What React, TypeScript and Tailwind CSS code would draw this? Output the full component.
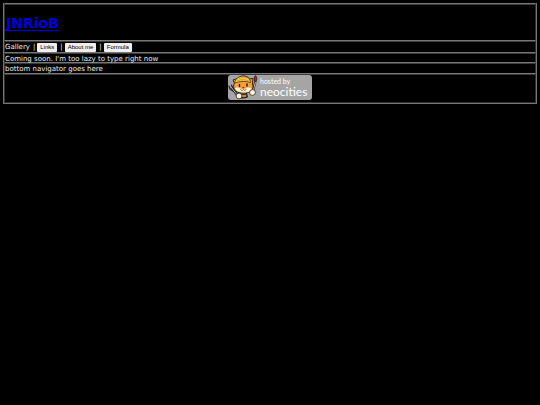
import type { ReactNode } from "react";

const links = ["Links", "About me", "Formula"];

function Row({ className, children }: { className: string; children: ReactNode }) {
  return (
    <div className={`flex border-x border-t border-x-[#303030] border-t-[#777777] shadow-[inset_0_1px_0_#3c3c3c] ${className}`}>
      {children}
    </div>
  );
}

function NeocitiesBadge() {
  return (
    <a
      href="#neocities"
      className="relative flex h-[25px] w-[84px] flex-col rounded-[3px] bg-[#a5a5a5] pl-8 font-[Lato,sans-serif] text-white"
    >
      <svg viewBox="0 0 34 27" className="absolute -left-px -top-px h-[27px] w-[34px]" aria-hidden="true">
        <g strokeLinecap="round" fill="none">
          <path d="M5 14l6 8" stroke="#20242a" strokeWidth="2.6" />
          <path d="M2 12l1 3 3 2 2-2-1-3M4.500 11l1.500 4" stroke="#20242a" strokeWidth="1.200" />
          <path d="M4 13l7 9" stroke="#a3b0bf" strokeWidth="1" />
          <path d="M28.500 7l-2.500 10" stroke="#292326" strokeWidth="2.2" />
          <path d="M28.500 8l-2.200 8" stroke="#d5c5c0" strokeWidth=".9" />
        </g>
        <path d="M28.500 1.500c2 2 1.600 4.900-.2 6.300-1.800-1.800-1.500-4.500.2-6.300z" fill="#b51f2d" stroke="#30151a" strokeWidth=".8" />
        <path
          d="M7.500 9L6 6l4-1.300C13.500 1 20 1 22.500 5l3.500-.6-.6 5.600c1.600 4-.2 7.500-4.700 8.500-6 1.400-12.500.5-13.800-4-.5-2-.2-4 .6-5.500z"
          fill="#f5a03a"
          stroke="#302313"
        />
        <path d="M7.500 9c1-5 6-8 11-6.500 4 1 5 4 5 6-4-1.500-10-1.500-16 .5z" fill="#f7c948" stroke="#49351a" strokeWidth=".8" />
        <path d="M12 4.500c3-1.500 6-1.500 8 0M10.500 6.800c4-1.500 7-1.500 11 0" stroke="#bd862a" strokeWidth=".6" fill="none" />
        <path d="M8 14c2-1 5-.6 6 1h4c1.500-2 4.500-2 6.500-.5-.5 3-3.500 4-7.500 4s-8-1.500-9-4.500z" fill="#fff3dc" />
        <path d="M12.500 10.500v2M20 10v2" stroke="#24170d" strokeWidth="1.400" strokeLinecap="round" />
        <path d="M15 13h2.500l-1.200 1.200z" fill="#5b2615" />
        <path d="M13.500 15.500c1 1.300 2.200 1 2.800 0 .8 1.200 2.200 1.200 3-.3" stroke="#5b2615" strokeWidth=".7" fill="none" />
        <path d="M12 19c3 1 5 1 8 0l1 4c-3 2-7 2-10 0z" fill="#241e19" />
        <path d="M14 20.500c2 .6 4 .6 5 0l.5 2c-2 1-4 1-6 0z" fill="#d98a35" />
        <circle cx="12" cy="22" r="2.900" fill="#fff5e6" stroke="#302313" strokeWidth=".8" />
        <circle cx="25.500" cy="18.500" r="2.900" fill="#fff5e6" stroke="#302313" strokeWidth=".8" />
      </svg>
      <span className="pt-[3px] text-[7px] leading-[7px]">hosted by</span>
      <span className="text-[12px] leading-[14px]">neocities</span>
    </a>
  );
}

export default function App() {
  return (
    <div className="min-h-screen bg-black p-[3px] font-['DejaVu_Sans',Verdana,sans-serif] text-[7px] leading-[9px] text-[#eeeeee]">
      <main className="border-x border-b border-[#777777]">
        <Row className="h-[37px] items-center pl-px pt-px">
          <h1 className="text-[14px] font-bold leading-4">
            <a href="#home" className="text-[#0000dd] underline decoration-1 underline-offset-2 [text-decoration-skip-ink:none]">
              JNRioB
            </a>
          </h1>
        </Row>
        <Row className="h-3 items-center pt-px">
          <nav className="flex items-center gap-[3px]">
            <span>Gallery</span>
            {links.map((label) => (
              <div key={label} className="flex items-center gap-[2px]">
                <span>|</span>
                <button className="h-[9px] rounded-[1px] bg-[#efefef] px-[3px] font-['Liberation_Sans',Arial,sans-serif] text-[6px] leading-[9px] text-black">
                  {label}
                </button>
              </div>
            ))}
          </nav>
        </Row>
        <Row className="h-[10px] items-start pt-[2px]">
          <p>Coming soon. I'm too lazy to type right now</p>
        </Row>
        <Row className="h-[11px] items-start pt-[2px]">
          <p>bottom navigator goes here</p>
        </Row>
        <Row className="h-[30px] items-start justify-center border-b border-b-[#303030] pt-px">
          <NeocitiesBadge />
        </Row>
      </main>
    </div>
  );
}
